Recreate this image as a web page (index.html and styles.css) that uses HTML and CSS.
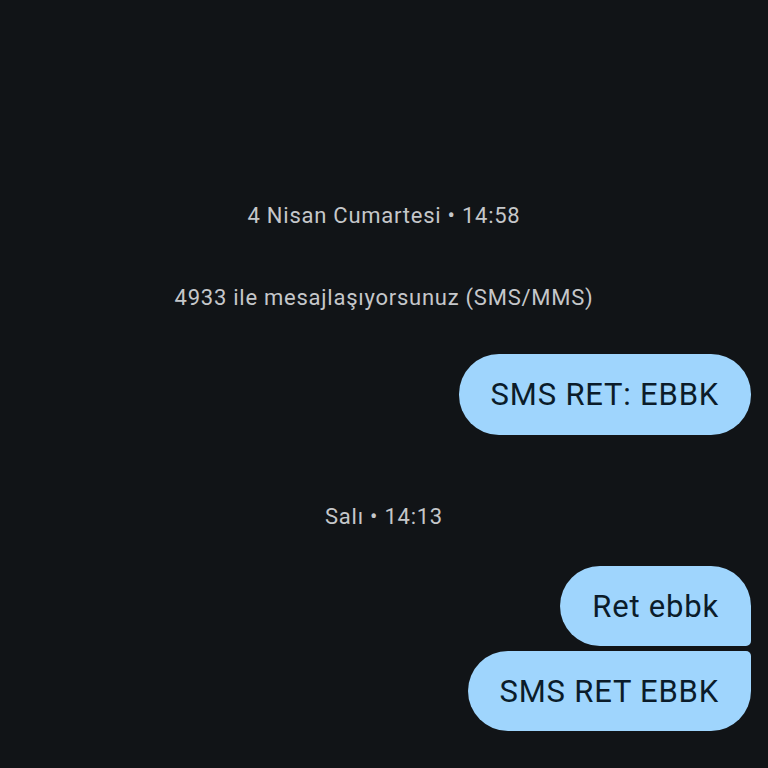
FILE: index.html
```html
<!DOCTYPE html>
<html lang="tr">
<head>
  <meta charset="UTF-8">
  <meta name="viewport" content="width=device-width, initial-scale=1.0">
  <title>4933</title>
  <link rel="stylesheet" href="styles.css">
</head>
<body>

  <div class="thread">

    <!-- First day -->
    <div class="meta date-first">4 Nisan Cumartesi • 14:58</div>
    <div class="meta info">4933 ile mesajlaşıyorsunuz (SMS/MMS)</div>

    <div class="bubble single">SMS RET: EBBK</div>

    <!-- Second day -->
    <div class="meta date-second">Salı • 14:13</div>

    <div class="group">
      <div class="bubble first">Ret ebbk</div>
      <div class="bubble last">SMS RET EBBK</div>
    </div>

  </div>

</body>
</html>
```

FILE: styles.css
```css
/* General styling */
body {
  margin: 0;
  padding: 0;
  background-color: #111417;
  font-family: Roboto, 'Noto Sans', sans-serif;
}

.thread {
  display: flex;
  flex-direction: column;
  padding: 202px 17px 0 17px;
}

/* Date and info lines */
.meta {
  align-self: center;
  font-size: 22px;
  line-height: 28px;
  letter-spacing: 0.75px;
  color: #c5c7ca;
}

.info {
  margin-top: 54px;
}

.date-second {
  margin-top: 68px;
}

/* Message bubbles */
.bubble {
  align-self: flex-end;
  height: 80px;
  padding: 0 32px;
  display: flex;
  align-items: center;
  background-color: #9fd5fd;
  color: #0b1c2a;
  font-size: 31px;
  letter-spacing: 0.8px;
  border-radius: 40px;
}

.single {
  margin-top: 42px;
  height: 81px;
}

.group {
  display: flex;
  flex-direction: column;
  align-items: flex-end;
  gap: 5px;
  margin-top: 35px;
}

.bubble.first {
  border-bottom-right-radius: 5px;
}

.bubble.last {
  border-top-right-radius: 5px;
}
```
